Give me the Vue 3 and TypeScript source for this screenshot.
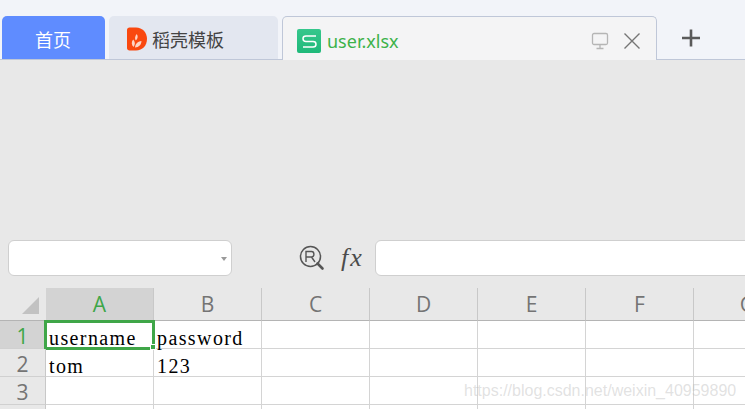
<template>
  <div class="app">
    <div class="tabbar">
      <div class="tab tab-home">首页</div>
      <div class="tab tab-template">
        <svg class="tab-icon" width="20" height="24" viewBox="0 0 20 24">
          <path d="M0 3C0 1.500 1 .5 2.500 .5H9c6.500 0 11 5 11 11.500S15.500 23.500 9 23.500H2.500C1 23.500 0 22.500 0 21Z" fill="#f9480f" />
          <path d="M6.500 20c-2.300-2.200-2.200-5.200-.3-7.500 2 2.200 2.300 5 .3 7.500Z" fill="#fcd5c6" />
          <path d="M8 20.500c.2-3.500 2.500-6 6.500-6.500-.2 3.800-2.500 6.300-6.500 6.500Z" fill="#fcd5c6" />
          <path d="M8.800 13.500C7.500 11.500 8 9 9.800 7c1.400 2.200 1.200 4.500-1 6.500Z" fill="#fcd5c6" />
        </svg>
        <span>稻壳模板</span>
      </div>
      <div class="tab tab-file">
        <svg class="file-icon" width="24" height="24" viewBox="0 0 24 24">
          <defs>
            <linearGradient id="file-bg" x1="0" y1="0" x2="0" y2="1">
              <stop offset="0" stop-color="#36c78c" />
              <stop offset="1" stop-color="#1fb97a" />
            </linearGradient>
          </defs>
          <rect width="24" height="24" rx="2" fill="url(#file-bg)" />
          <path d="M19 7H9C7 7 6 8 6 9.500S7 12.500 9 12.500h7c2 0 3 1 3 2.700s-1 2.800-3 2.800H6" fill="none" stroke="#fff" stroke-width="1.500" />
        </svg>
        <span class="file-name">user.xlsx</span>
        <svg class="screen-icon" width="18" height="18" viewBox="0 0 18 18">
          <rect x="1.500" y="1.500" width="15" height="11" rx="1.500" fill="none" stroke="#b5b5b5" stroke-width="1.300" />
          <path d="M9 12.500v3.500M5.500 16.500h7" stroke="#b5b5b5" stroke-width="1.300" fill="none" />
        </svg>
        <svg class="close-icon" width="18" height="18" viewBox="0 0 18 18">
          <path d="M1.500 1.500l15 15M16.500 1.500l-15 15" stroke="#757575" stroke-width="1.400" fill="none" />
        </svg>
      </div>
      <svg class="plus-icon" width="20" height="20" viewBox="0 0 20 20">
        <path d="M10 1.500v17M1 10h18" stroke="#5a5a5a" stroke-width="2.600" fill="none" />
      </svg>
    </div>

    <div class="toolbar"></div>

    <div class="formula-bar">
      <div class="name-box"><span class="caret"></span></div>
      <svg class="find-icon" width="26" height="26" viewBox="0 0 26 26">
        <circle cx="11.500" cy="11.500" r="10" fill="none" stroke="#555" stroke-width="1.500" />
        <path d="M7 17V6.500h5.500c3.200 0 3.200 5.500 0 5.500H7M12.500 12l3.500 5" fill="none" stroke="#555" stroke-width="1.400" />
        <path d="M18.500 18.500l5 5" stroke="#555" stroke-width="2.600" stroke-linecap="round" />
      </svg>
      <span class="fx">fx</span>
      <div class="formula-input"></div>
    </div>

    <div class="sheet">
      <div class="row row-head">
        <div class="corner"><span class="corner-mark"></span></div>
        <div
          v-for="col in columns"
          :key="col"
          class="col-head"
          :class="{ selected: col === 'A' }"
        >{{ col }}</div>
      </div>
      <div v-for="row in rows" :key="row.id" class="row">
        <div class="row-num" :class="{ selected: row.id === 1 }">{{ row.label }}</div>
        <div
          v-for="(col, i) in columns"
          :key="col"
          class="cell"
          :class="{ active: row.id === 1 && i === 0 }"
        >{{ row.cells[i] }}</div>
      </div>
    </div>

    <div class="watermark">https://blog.csdn.net/weixin_40959890</div>
  </div>
</template>

<script setup lang="ts">
const columns = ['A', 'B', 'C', 'D', 'E', 'F', 'G']

// the fourth row only peeks in at the bottom edge, so it shows no number
const rows: { id: number; label: string; cells: string[] }[] = [
  { id: 1, label: '1', cells: ['username', 'password'] },
  { id: 2, label: '2', cells: ['tom', '123'] },
  { id: 3, label: '3', cells: [] },
  { id: 4, label: '', cells: [] }
]
</script>

<style>
html,
body {
  margin: 0;
  overflow: hidden;
}
</style>

<style scoped>
.app {
  position: relative;
  width: 745px;
  height: 409px;
  overflow: hidden;
  background: #e8e8e8;
  font-family: "Noto Sans CJK SC", "Noto Sans", sans-serif;
}

/* Tabs */
.tabbar {
  display: flex;
  align-items: flex-end;
  box-sizing: border-box;
  height: 60px;
  padding-left: 2px;
  background: #f2f4f9;
  border-bottom: 1px solid #bfc7d8;
}

.tab {
  display: flex;
  align-items: center;
  box-sizing: border-box;
  height: 43px;
  margin-bottom: -1px;
  border-radius: 5px 5px 0 0;
  font-size: 18px;
}

.tab-home {
  justify-content: center;
  width: 103px;
  height: 43px;
  margin-bottom: 0;
  padding: 2px 1px 0 0;
  background: #5f8cff;
  color: #fff;
}

.tab-template {
  width: 169px;
  height: 43px;
  margin-bottom: 0;
  margin-left: 4px;
  padding: 2px 0 0 18px;
  gap: 5px;
  background: #e3e7f0;
  color: #444;
}

.tab-file {
  position: relative;
  width: 375px;
  height: 44px;
  margin-left: 4px;
  padding: 4px 15px 0 14px;
  background: #f4f4f5;
  border: 1px solid #bfc7d8;
  border-bottom: none;
}

.file-name {
  margin-left: 6px;
  color: #3cb24a;
  font-family: "Noto Sans", sans-serif;
  font-size: 18px;
}

.screen-icon {
  margin-left: auto;
}

.close-icon {
  margin-left: 14px;
}

.plus-icon {
  margin: 0 0 11px 24px;
}

.toolbar {
  height: 180px;
}

/* Formula bar */
.formula-bar {
  display: flex;
  align-items: center;
  height: 36px;
  padding-left: 8px;
}

.name-box,
.formula-input {
  box-sizing: border-box;
  height: 36px;
  background: #fff;
  border: 1px solid #cfcfcf;
  border-radius: 6px;
}

.name-box {
  position: relative;
  flex: none;
  width: 224px;
}

.caret {
  position: absolute;
  top: 16px;
  right: 4px;
  border-top: 4px solid #9a9a9a;
  border-left: 3px solid transparent;
  border-right: 3px solid transparent;
}

.find-icon {
  flex: none;
  margin-left: 67px;
}

.fx {
  flex: none;
  width: 24px;
  margin-left: 16px;
  color: #4c4c4c;
  font-family: "Liberation Serif", serif;
  font-size: 26px;
  font-style: italic;
  letter-spacing: 2px;
  line-height: 34px;
}

.formula-input {
  flex: 1;
  margin-left: 10px;
  margin-right: -10px;
}

/* Sheet */
.sheet {
  margin-top: 12px;
}

.row {
  display: flex;
  height: 28px;
  background: #fff;
}

.row-head {
  height: 33px;
  background: #e8e8e8;
}

.corner,
.row-num {
  position: relative;
  flex: none;
  box-sizing: border-box;
  width: 46px;
  background: #e8e8e8;
  border-right: 1px solid #c8c8c8;
}

.corner {
  border-right: none;
  border-bottom: 1px solid #b4b4b4;
}

.corner-mark {
  position: absolute;
  right: 7px;
  bottom: 6px;
  border-bottom: 17px solid #c2c2c2;
  border-left: 17px solid transparent;
}

.col-head {
  flex: none;
  box-sizing: border-box;
  width: 108px;
  border-right: 1px solid #c8c8c8;
  border-bottom: 1px solid #b4b4b4;
  color: #747474;
  font-family: "Open Sans", sans-serif;
  font-size: 21px;
  line-height: 32px;
  text-align: center;
}

.col-head.selected {
  background: #d3d3d3;
  color: #3da648;
}

.row-num {
  border-bottom: 1px solid #d0d0d0;
  color: #747474;
  font-family: "Open Sans", sans-serif;
  font-size: 21px;
  line-height: 30px;
  text-align: center;
}

.row-num.selected {
  background: #d3d3d3;
  color: #3da648;
}

.cell {
  position: relative;
  flex: none;
  box-sizing: border-box;
  width: 108px;
  padding: 5px 0 0 3px;
  border-right: 1px solid #d4d4d4;
  border-bottom: 1px solid #d4d4d4;
  color: #000;
  font-family: "Liberation Serif", serif;
  font-size: 20px;
  letter-spacing: 1.4px;
  line-height: 25px;
  white-space: nowrap;
}

.cell.active::after {
  content: "";
  position: absolute;
  top: -1px;
  left: -2px;
  width: 105px;
  height: 24px;
  border: 3px solid #3fa648;
}

.cell.active::before {
  content: "";
  position: absolute;
  right: -3px;
  bottom: -2px;
  z-index: 1;
  width: 6px;
  height: 6px;
  background: #3fa648;
  border: 1px solid #fff;
  box-sizing: border-box;
}

.watermark {
  position: absolute;
  top: 382px;
  left: 464px;
  color: rgba(190, 190, 190, 0.45);
  font-family: "Liberation Sans", sans-serif;
  font-size: 16px;
  white-space: nowrap;
}
</style>
